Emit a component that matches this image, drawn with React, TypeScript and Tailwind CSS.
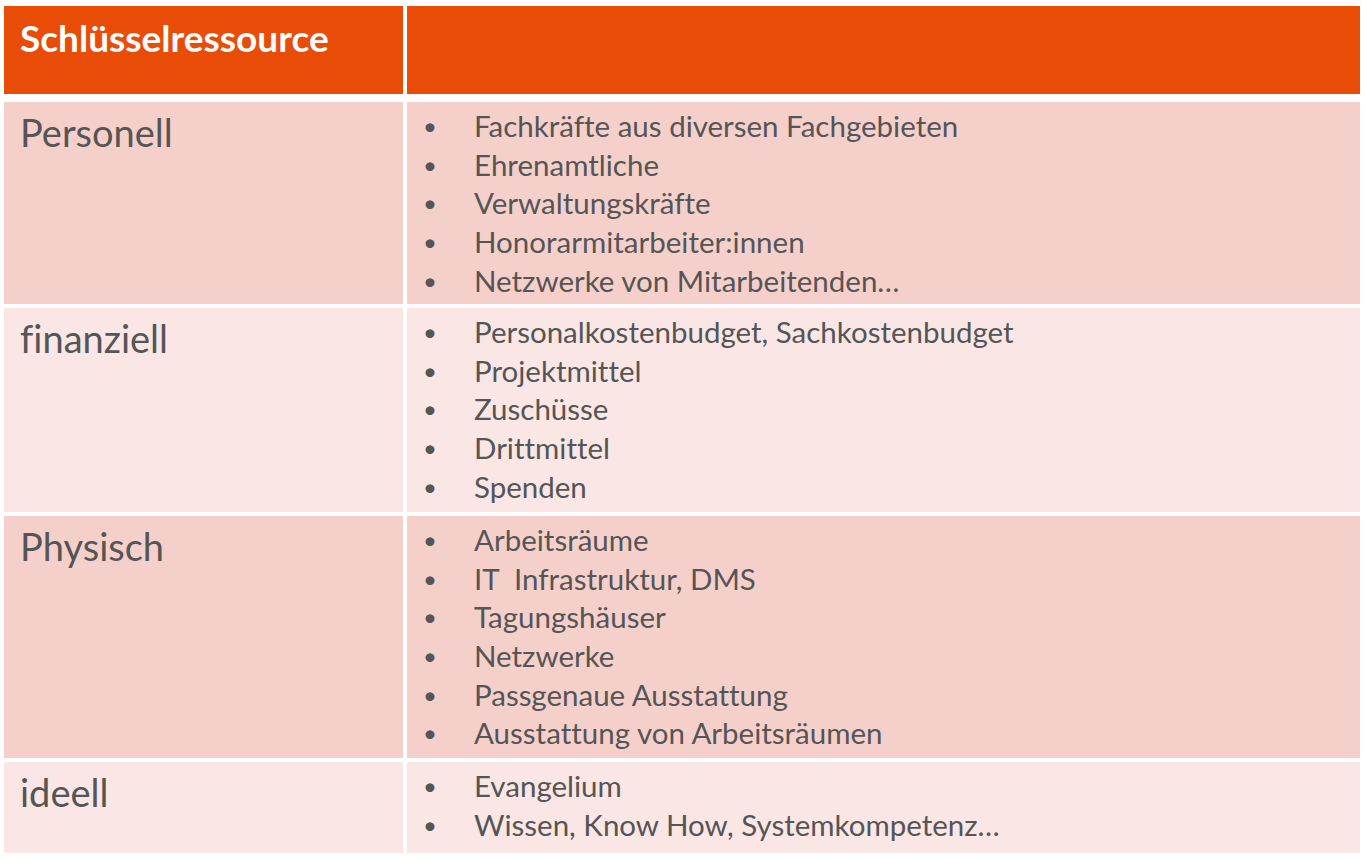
const rows: { label: string; items: string[]; tone: "dark" | "light"; h: string }[] = [
  {
    label: "Personell",
    tone: "dark",
    h: "h-[202px]",
    items: [
      "Fachkräfte aus diversen Fachgebieten",
      "Ehrenamtliche",
      "Verwaltungskräfte",
      "Honorarmitarbeiter:innen",
      "Netzwerke von Mitarbeitenden…",
    ],
  },
  {
    label: "finanziell",
    tone: "light",
    h: "h-[204px]",
    items: ["Personalkostenbudget, Sachkostenbudget", "Projektmittel", "Zuschüsse", "Drittmittel", "Spenden"],
  },
  {
    label: "Physisch",
    tone: "dark",
    h: "h-[242px]",
    items: [
      "Arbeitsräume",
      "IT  Infrastruktur, DMS",
      "Tagungshäuser",
      "Netzwerke",
      "Passgenaue Ausstattung",
      "Ausstattung von Arbeitsräumen",
    ],
  },
  {
    label: "ideell",
    tone: "light",
    h: "h-[91px]",
    items: ["Evangelium", "Wissen, Know How, Systemkompetenz…"],
  },
];

export default function App() {
  return (
    <div className="min-h-screen bg-white pt-[6px] pl-[4px] font-['Lato',sans-serif] text-[#555555] [font-variant-ligatures:none]">
      <div className="w-[1356px]">
        {/* header row */}
        <div className="flex gap-[4px] h-[88px]">
          <div className="w-[399px] bg-[#E84C06] pl-[16px] pt-[12px]">
            <span className="text-[37px] font-bold text-white leading-[40px] whitespace-pre">Schlüsselressource</span>
          </div>
          <div className="grow bg-[#E84C06]" />
        </div>

        <div className="mt-[8px] flex flex-col gap-[4px]">
          {rows.map((r) => (
            <div key={r.label} className={`flex gap-[4px] ${r.h}`}>
              <div
                className={`w-[399px] pl-[16px] pt-[7px] ${r.tone === "dark" ? "bg-[#F5D0CB]" : "bg-[#FAE7E5]"}`}
              >
                <span className="text-[38px] leading-[46px]">{r.label}</span>
              </div>
              <div className={`grow pt-[5px] ${r.tone === "dark" ? "bg-[#F5D0CB]" : "bg-[#FAE7E5]"}`}>
                <ul>
                  {r.items.map((it) => (
                    <li key={it} className="flex items-center h-[38.6px] text-[29.5px]">
                      <span className="w-[45px] pl-[16px] text-[24px]">•</span>
                      <span className="pl-[22px] whitespace-pre">{it}</span>
                    </li>
                  ))}
                </ul>
              </div>
            </div>
          ))}
        </div>
      </div>
    </div>
  );
}
